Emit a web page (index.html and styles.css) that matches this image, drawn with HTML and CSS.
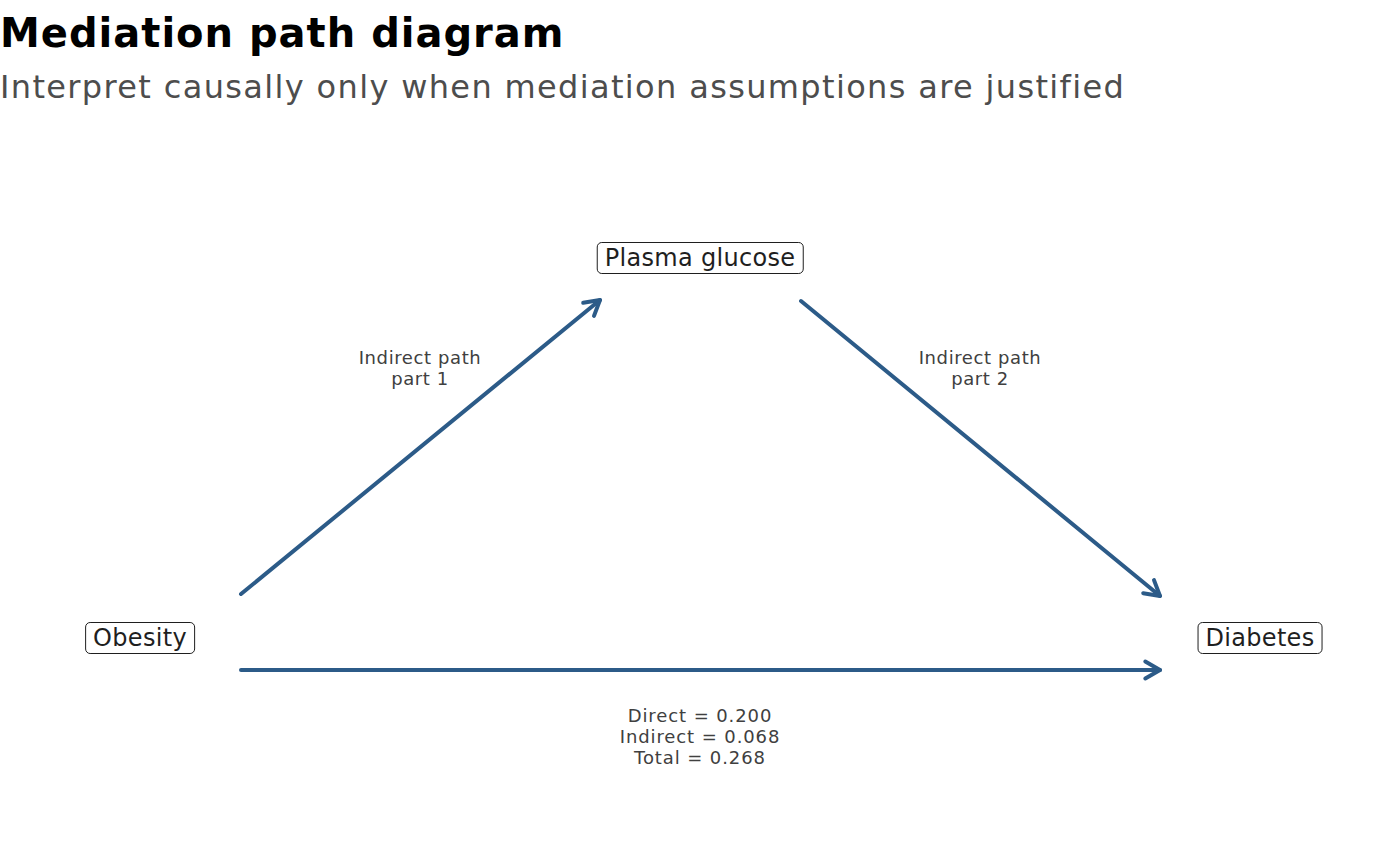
FILE: index.html
```html
<!DOCTYPE html>
<html lang="en">
<head>
<meta charset="utf-8">
<title>Mediation path diagram</title>
<link rel="stylesheet" href="styles.css">
</head>
<body>
<div class="page">
  <header class="header">
    <h1 class="title">Mediation path diagram</h1>
    <p class="subtitle">Interpret causally only when mediation assumptions are justified</p>
  </header>
  <main class="diagram">
    <svg class="edges" width="1400" height="746" viewBox="0 0 1400 746" xmlns="http://www.w3.org/2000/svg">
      <g fill="none" stroke="#2c5b88" stroke-width="4" stroke-linecap="round" stroke-linejoin="round">
        <line x1="241" y1="474" x2="600" y2="180"/>
        <polyline points="583.2,182.8 600,180 594,195.9"/>
        <line x1="801" y1="181" x2="1160" y2="476"/>
        <polyline points="1154,460.1 1160,476 1143.2,473.2"/>
        <line x1="241" y1="550" x2="1160" y2="550"/>
        <polyline points="1145.3,541.5 1160,550 1145.3,558.5"/>
      </g>
    </svg>
    <div class="node node-mediator">Plasma glucose</div>
    <div class="node node-exposure">Obesity</div>
    <div class="node node-outcome">Diabetes</div>
    <div class="edge-label label-a">Indirect path<br>part 1</div>
    <div class="edge-label label-b">Indirect path<br>part 2</div>
    <div class="edge-label effects label-c">Direct = 0.200<br>Indirect = 0.068<br>Total = 0.268</div>
  </main>
</div>
</body>
</html>
```

FILE: styles.css
```css
html, body {
  margin: 0;
  padding: 0;
  background: #ffffff;
}

body {
  font-family: "DejaVu Sans", "Liberation Sans", sans-serif;
  color: #000000;
}

.page {
  width: 1400px;
  height: 866px;
  display: flex;
  flex-direction: column;
  overflow: hidden;
}

.header {
  height: 120px;
  flex: 0 0 120px;
  padding-top: 10px;
  box-sizing: border-box;
}

.title {
  margin: 0;
  font-size: 40px;
  font-weight: bold;
  line-height: 1.164;
  letter-spacing: 1px;
  color: #000000;
}

.subtitle {
  margin: 12px 0 0 0;
  font-size: 32px;
  line-height: 1.164;
  letter-spacing: 1.35px;
  color: #4d4d4d;
}

.diagram {
  position: relative;
  flex: 1 1 auto;
}

.edges {
  position: absolute;
  left: 0;
  top: 0;
}

.node {
  position: absolute;
  transform: translate(-50%, -50%);
  font-size: 24px;
  line-height: 24px;
  letter-spacing: 0.3px;
  padding: 3px 7px 3px 7px;
  border: 1.6px solid #1f1f1f;
  border-radius: 5px;
  background: #ffffff;
  color: #1f1f1f;
  white-space: nowrap;
}

.node-mediator { left: 700px; top: 138px; }
.node-exposure { left: 140px; top: 518px; }
.node-outcome  { left: 1260px; top: 518px; }

.edge-label {
  position: absolute;
  transform: translate(-50%, -50%);
  font-size: 18px;
  line-height: 21px;
  letter-spacing: 0.6px;
  text-align: center;
  color: #404040;
  white-space: nowrap;
}

.effects {
  letter-spacing: 0.9px;
}

.label-a { left: 420px; top: 248px; }
.label-b { left: 980px; top: 248px; }
.label-c { left: 700px; top: 616px; }
```
